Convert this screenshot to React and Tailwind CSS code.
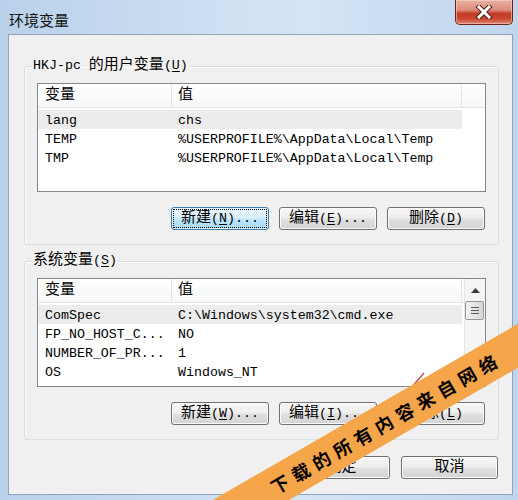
import React from "react";

const C = ({ children }) => <span className="text-[15px]">{children}</span>;
const K = ({ children }) => (
  <span className="underline underline-offset-[2px]">{children}</span>
);

function Btn({ children, focused, w = "w-[98px]" }) {
  const normal =
    "border-[#707070] bg-[linear-gradient(to_bottom,#f6f6f6_0%,#eeeeee_48%,#e0e0e0_52%,#d4d4d4_100%)] shadow-[inset_0_0_0_1px_#fbfbfb]";
  const foc =
    "border-[#3c7fb1] bg-[linear-gradient(to_bottom,#eaf6fd_0%,#d9f0fc_48%,#bee6fd_52%,#a7d9f5_100%)] shadow-[inset_0_0_0_1px_#e6f5fd] outline-1 outline-dotted outline-black outline-offset-[-3px]";
  return (
    <div
      className={`${w} h-[23px] rounded-[3px] border flex items-center justify-center leading-[16px] ${
        focused ? foc : normal
      }`}
    >
      {children}
    </div>
  );
}

function Row({ a, b, sel }) {
  return (
    <div
      className={`h-[19px] w-[424px] pt-[2px] flex items-center ${sel ? "bg-[#ececec]" : ""}`}
    >
      <div className="w-[134px] pl-[7px] whitespace-nowrap">{a}</div>
      <div className="w-[290px] pl-[6px] whitespace-nowrap">{b}</div>
    </div>
  );
}

function Scrollbar() {
  return (
    <div className="w-[21px] shrink-0 flex flex-col bg-[#f4f4f4] border-l border-[#e6e6e6]">
      <div className="h-[22px] flex items-center justify-center">
        <svg width="9" height="5" viewBox="0 0 9 5">
          <path d="M0 5 L4.5 0 L9 5 Z" fill="#3c3c3c" />
        </svg>
      </div>
      <div className="h-[19px] mr-[1px] border border-[#979797] rounded-[2px] bg-[linear-gradient(to_right,#f3f3f3,#e6e6e6_50%,#d6d6d6)] flex flex-col items-center justify-center gap-[2px]">
        <div className="w-[8px] h-[1px] bg-[#5a5a5a]" />
        <div className="w-[8px] h-[1px] bg-[#5a5a5a]" />
        <div className="w-[8px] h-[1px] bg-[#5a5a5a]" />
      </div>
      <div className="flex-1" />
      <div className="h-[22px] flex items-center justify-center">
        <svg width="9" height="5" viewBox="0 0 9 5">
          <path d="M0 0 L4.5 5 L9 0 Z" fill="#3c3c3c" />
        </svg>
      </div>
    </div>
  );
}

function List({ rows, scroll }) {
  return (
    <div className="h-[109px] border border-[#828790] bg-white flex overflow-hidden">
      <div className="flex-1 flex flex-col min-w-0">
        <div className="h-[24px] shrink-0 flex border-b border-[#e0e3e7] bg-[linear-gradient(to_bottom,#ffffff,#f6f7f9)]">
          <div className="w-[134px] pl-[7px] pt-[1px] flex items-center border-r border-[#e3e5e8]">
            <C>变量</C>
          </div>
          <div className="w-[290px] pl-[6px] pt-[1px] flex items-center border-r border-[#e3e5e8]">
            <C>值</C>
          </div>
        </div>
        <div className="pt-[2px]">
          {rows.map((r, i) => (
            <Row key={i} a={r[0]} b={r[1]} sel={r[2]} />
          ))}
        </div>
      </div>
      {scroll && <Scrollbar />}
    </div>
  );
}

function Group({ legend, rows, scroll, buttons, className }) {
  return (
    <fieldset
      className={`m-0 p-0 border border-[#d5dfe5] rounded-[3px] shadow-[inset_1px_1px_0_#ffffff] ${className}`}
    >
      <legend className="ml-[7px] px-[1px] leading-[16px]">{legend}</legend>
      <div className="px-[12px] pt-[9px] pb-[14px]">
        <List rows={rows} scroll={scroll} />
        <div className="mt-[15px] flex justify-end gap-[10px] pr-[1px]">
          {buttons}
        </div>
      </div>
    </fieldset>
  );
}

export default function App() {
  const tmp = "%USERPROFILE%\\AppData\\Local\\Temp";
  return (
    <div className="relative w-[518px] h-[500px] overflow-hidden flex flex-col pb-[5px] bg-[linear-gradient(to_right,#b9d1ea,#cfe1f3_45%,#d3e4f5_60%,#bfd5ed)] font-['Liberation_Mono','Noto_Sans_CJK_SC',monospace] text-[13.3px] leading-[16px] text-black">
      {/* title bar */}
      <div className="h-[34px] shrink-0 flex items-start justify-between">
        <div className="pl-[9px] pt-[11px] font-['Noto_Sans_CJK_SC',sans-serif] text-[15px] leading-[18px] text-[#111]">
          环境变量
        </div>
        <div className="mr-[5px] w-[58px] h-[25px] border border-t-0 border-[#6d2418] rounded-b-[5px] bg-[linear-gradient(to_bottom,#eab2a4_0%,#dc8c7b_42%,#c23b26_56%,#c8472f_78%,#e08872_100%)] shadow-[inset_0_0_0_1px_rgba(255,220,210,0.5)] flex items-center justify-center">
          <svg width="18" height="14" viewBox="0 0 18 14">
            <path
              d="M4 2 L14 12 M14 2 L4 12"
              stroke="#5a1a10"
              strokeWidth="5"
              strokeLinecap="square"
            />
            <path
              d="M4 2 L14 12 M14 2 L4 12"
              stroke="#ffffff"
              strokeWidth="3"
              strokeLinecap="square"
            />
          </svg>
        </div>
      </div>

      {/* client area */}
      <div className="flex-1 ml-[8px] mr-[5px] border border-[#8ea4bd] bg-[#f0f0f0] flex flex-col">
        <Group
          className="mt-[23px] ml-[15px] mr-[13px]"
          legend={
            <>
              HKJ-pc <C>的用户变量</C>(<K>U</K>)
            </>
          }
          rows={[
            ["lang", "chs", true],
            ["TEMP", tmp],
            ["TMP", tmp],
          ]}
          buttons={
            <>
              <Btn focused>
                <C>新建</C>(<K>N</K>)...
              </Btn>
              <Btn>
                <C>编辑</C>(<K>E</K>)...
              </Btn>
              <Btn>
                <C>删除</C>(<K>D</K>)
              </Btn>
            </>
          }
        />
        <Group
          className="mt-[8px] ml-[15px] mr-[13px]"
          legend={
            <>
              <C>系统变量</C>(<K>S</K>)
            </>
          }
          scroll
          rows={[
            ["ComSpec", "C:\\Windows\\system32\\cmd.exe", true],
            ["FP_NO_HOST_C...", "NO"],
            ["NUMBER_OF_PR...", "1"],
            ["OS", "Windows_NT"],
          ]}
          buttons={
            <>
              <Btn>
                <C>新建</C>(<K>W</K>)...
              </Btn>
              <Btn>
                <C>编辑</C>(<K>I</K>)...
              </Btn>
              <Btn>
                <C>删除</C>(<K>L</K>)
              </Btn>
            </>
          }
        />
        <div className="mt-[16px] mr-[14px] flex justify-end gap-[11px]">
          <Btn w="w-[97px]">
            <C>确定</C>
          </Btn>
          <Btn w="w-[97px]">
            <C>取消</C>
          </Btn>
        </div>
      </div>

      {/* cursor line */}
      <svg
        className="absolute left-[400px] top-[370px]"
        width="28"
        height="30"
        viewBox="0 0 28 30"
      >
        <path d="M24 3 L3 27" stroke="#c8404c" strokeWidth="1.3" />
      </svg>

      {/* watermark */}
      <div className="absolute left-[146px] top-[403px] w-[480px] h-[38px] rotate-[-30deg] bg-[#f5a54a] flex items-center justify-center font-['Noto_Sans_CJK_SC',sans-serif] font-bold text-[18px] leading-[20px] tracking-[6px] text-black">
        下载的所有内容来自网络
      </div>
    </div>
  );
}
